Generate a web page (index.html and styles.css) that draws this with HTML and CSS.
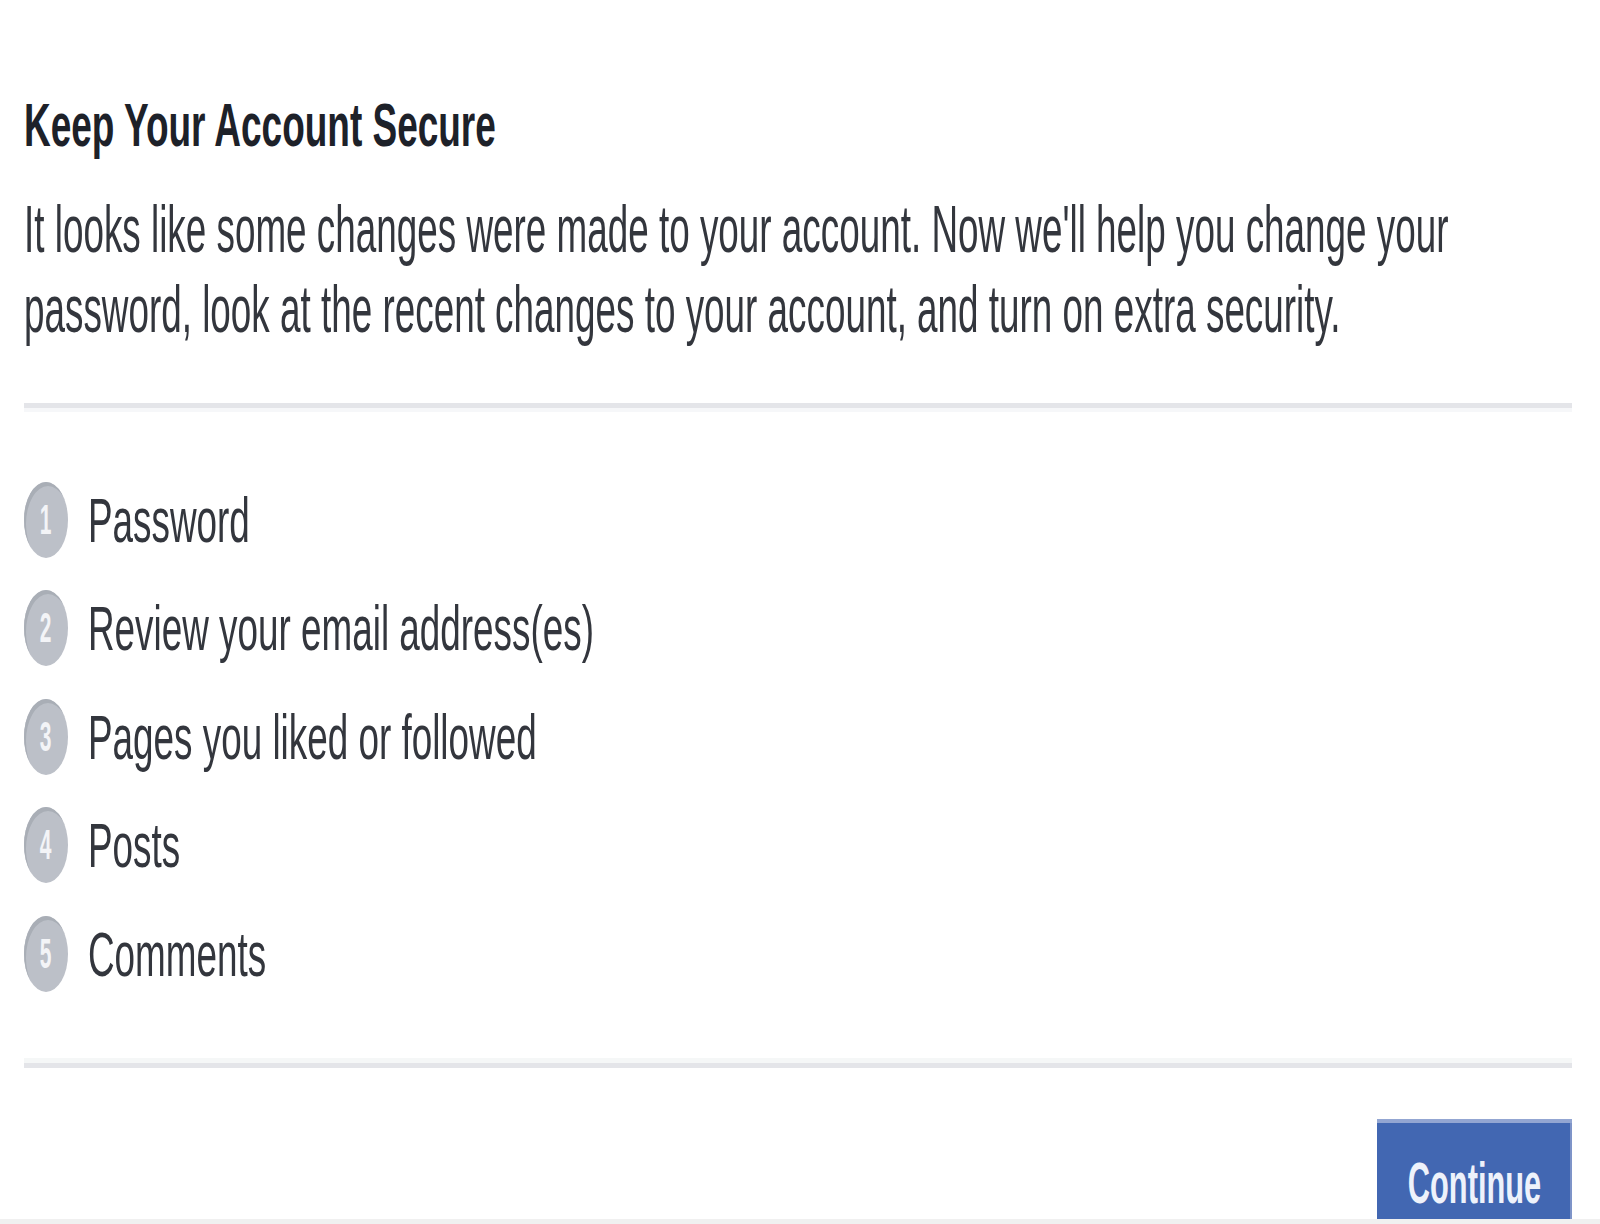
FILE: index.html
```html
<!DOCTYPE html>
<html lang="en">
<head>
<meta charset="utf-8">
<title>Keep Your Account Secure</title>
<link rel="stylesheet" href="styles.css">
</head>
<body>
<div class="dialog">
  <h2 class="title"><span class="sx sx-title">Keep Your Account Secure</span></h2>
  <p class="intro"><span class="sx sx-body">It looks like some changes were made to your account. Now we'll help you change your<br>password, look at the recent changes to your account, and turn on extra security.</span></p>
  <hr class="rule rule-top">
  <ol class="steps">
    <li class="step"><span class="badge"><span class="num">1</span></span><span class="label"><span class="sx sx-step">Password</span></span></li>
    <li class="step"><span class="badge"><span class="num">2</span></span><span class="label"><span class="sx sx-step">Review your email address(es)</span></span></li>
    <li class="step"><span class="badge"><span class="num">3</span></span><span class="label"><span class="sx sx-step">Pages you liked or followed</span></span></li>
    <li class="step"><span class="badge"><span class="num">4</span></span><span class="label"><span class="sx sx-step">Posts</span></span></li>
    <li class="step"><span class="badge"><span class="num">5</span></span><span class="label"><span class="sx sx-step">Comments</span></span></li>
  </ol>
  <hr class="rule rule-bottom">
  <div class="actions">
    <button class="btn" type="button"><span class="btn-text">Continue</span></button>
  </div>
</div>
<div class="footer"></div>
</body>
</html>
```

FILE: styles.css
```css
html, body {
  margin: 0;
  padding: 0;
  overflow: hidden;
  background: #ffffff;
}

body {
  width: 1600px;
  height: 1224px;
  display: flex;
  flex-direction: column;
  font-family: "Liberation Sans", Arial, sans-serif;
  color: #1d2129;
}

.dialog {
  padding: 90px 28px 0 24px;
  flex: none;
}

.sx {
  display: inline-block;
  white-space: nowrap;
  transform-origin: left center;
}

.title {
  margin: 0;
  font-size: 61px;
  line-height: 70px;
  font-weight: bold;
  color: #1d2129;
  overflow: hidden;
}

.sx-title {
  transform: scaleX(0.606);
}

.intro {
  margin: 29px 0 0;
  font-size: 67px;
  line-height: 80px;
  color: #33363d;
  overflow: hidden;
}

.sx-body {
  transform: scaleX(0.55);
}

.rule {
  border: 0;
  height: 5px;
  margin: 0;
  background: #e4e5e9;
}

.rule-top {
  margin-top: 54px;
  box-shadow: 0 4px 0 #f6f7f9;
}

.rule-bottom {
  margin-top: 71px;
  box-shadow: 0 -5px 0 #f5f7f7;
}

.steps {
  list-style: none;
  margin: 74px 0 0;
  padding: 0;
  display: flex;
  flex-direction: column;
  gap: 32.4px;
}

.step {
  display: flex;
  align-items: center;
  height: 76px;
}

.badge {
  width: 44px;
  height: 76px;
  border-radius: 50%;
  background: #bcc0c8;
  box-shadow: inset 2px 4px 0 #a9aeb6;
  display: flex;
  align-items: center;
  justify-content: center;
  flex: none;
}

.num {
  display: inline-block;
  font-size: 42px;
  line-height: 42px;
  font-weight: bold;
  color: #f3f4f7;
  transform: scaleX(0.5);
}

.label {
  margin-left: 20px;
  font-size: 63px;
  line-height: 76px;
  color: #33363d;
  overflow: hidden;
}

.sx-step {
  transform: scaleX(0.585);
}

.actions {
  margin-top: 51px;
  display: flex;
  justify-content: flex-end;
}

.btn {
  width: 195px;
  height: 100px;
  padding: 28px 0 0;
  box-sizing: border-box;
  border: 0;
  border-radius: 0;
  background: #4267b2;
  box-shadow: inset 0 4px 0 #93a6d2, inset -2px 0 0 #7e94c8;
  color: #ffffff;
  font-family: "Liberation Sans", Arial, sans-serif;
  font-size: 57px;
  line-height: 72px;
  font-weight: bold;
  display: flex;
  justify-content: center;
  align-items: flex-start;
  overflow: hidden;
  white-space: nowrap;
}

.btn-text {
  display: inline-block;
  transform: scaleX(0.54);
  color: #eef2fb;
}

.footer {
  flex: 1;
  background: #f0f0f0;
}
```
